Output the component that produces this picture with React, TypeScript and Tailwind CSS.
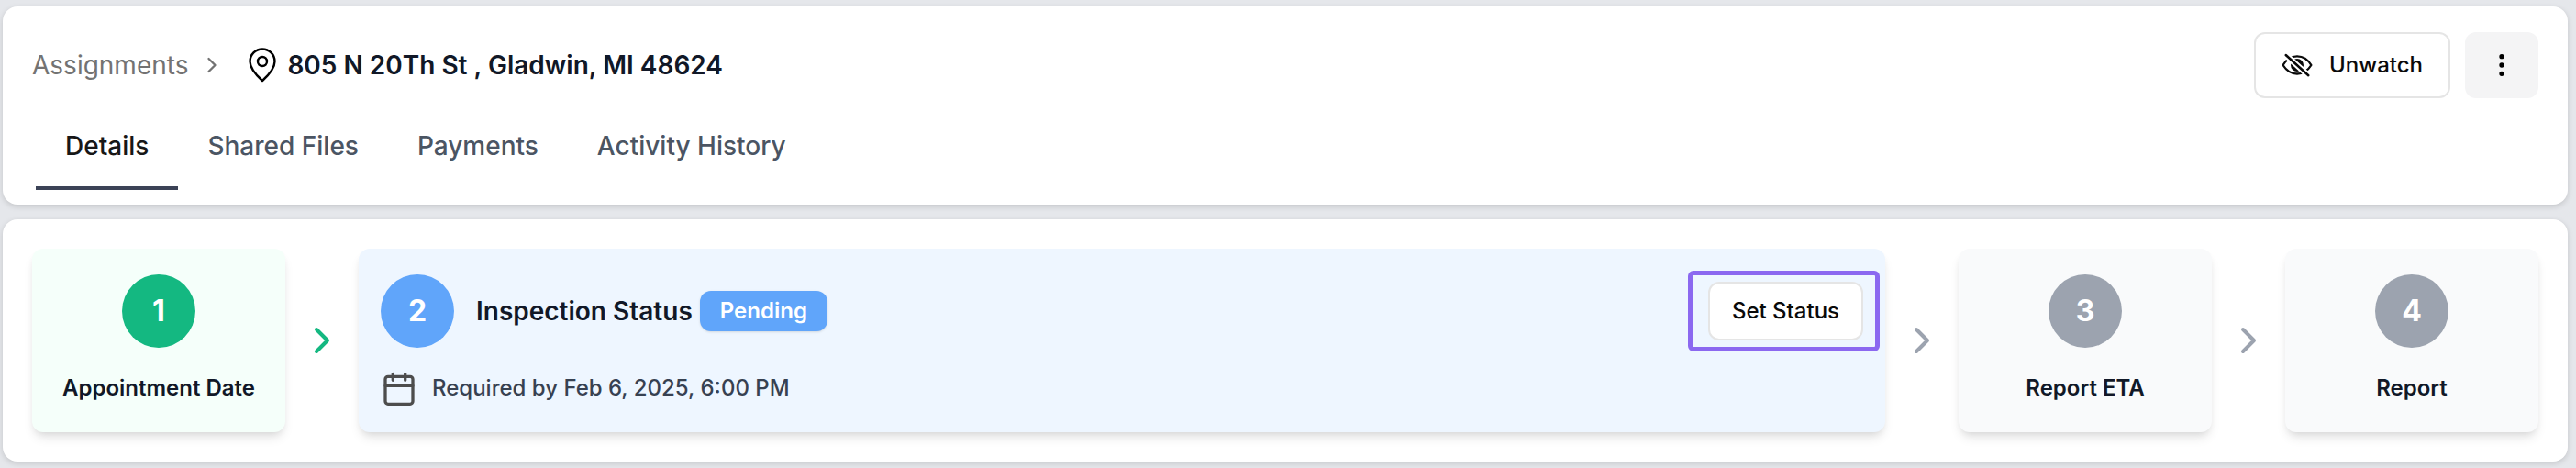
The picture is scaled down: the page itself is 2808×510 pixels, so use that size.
import { ChevronRight, EllipsisVertical } from "lucide-react";

const tabs = ["Details", "Shared Files", "Payments", "Activity History"];

function PinIcon() {
  return (
    <svg width="32" height="38" viewBox="-2 0 32 38" fill="none" stroke="currentColor" strokeWidth="2.4" aria-hidden="true">
      <path d="M15 36C10 31.5 1.5 23.5 1.5 15a13.5 13.5 0 0 1 27 0C28.5 23.5 20 31.5 15 36Z" strokeLinejoin="round" />
      <circle cx="15" cy="15" r="5" />
    </svg>
  );
}

function EyeSlashIcon() {
  return (
    <svg width="36" height="26" viewBox="0 0 36 26" fill="none" strokeLinecap="round" aria-hidden="true">
      <path
        d="M1.6 13C6 5.5 11 3.3 17 3.3S28 5.5 32.4 13C28 20 23 22.5 17 22.5S6 20 1.6 13Z"
        stroke="currentColor"
        strokeWidth="2.3"
        strokeLinejoin="round"
      />
      <circle cx="17" cy="13" r="7" fill="currentColor" />
      <path d="M3.5 1 30.5 25.5" stroke="#fff" strokeWidth="6.5" />
      <path d="M4.7 2 29.3 24.2" stroke="currentColor" strokeWidth="2.5" />
    </svg>
  );
}

function CalendarIcon() {
  return (
    <svg
      width="40"
      height="40"
      viewBox="0 0 40 40"
      fill="none"
      stroke="#4d4d4d"
      strokeWidth="3.3"
      strokeLinecap="round"
      aria-hidden="true"
    >
      <rect x="5" y="7.3" width="30" height="30" rx="3" />
      <path d="M5 17.3h30M13.3 4.3v7M26.7 4.3v7" />
    </svg>
  );
}

function SmallStep({ number, label, done }: { number: number; label: string; done?: boolean }) {
  return (
    <li
      className={`flex h-[200px] w-[276px] shrink-0 flex-col items-center rounded-xl pt-7 shadow-[0_8px_12px_-2px_rgba(0,0,0,0.1),0_4px_8px_-4px_rgba(0,0,0,0.1)] ${
        done ? "bg-[#f5fffa]" : "bg-[#f9fafb]"
      }`}
    >
      <span
        className={`flex size-20 items-center justify-center rounded-full text-[32px] font-bold text-white ${
          done ? "bg-[#14b881]" : "bg-[#9ca3af]"
        }`}
      >
        {number}
      </span>
      <span className="mt-7 text-2xl font-semibold text-[#111827]">{label}</span>
    </li>
  );
}

function Arrow({ done }: { done?: boolean }) {
  return (
    <li aria-hidden="true" className="flex w-20 shrink-0 items-center justify-center">
      <ChevronRight size={48} className={done ? "text-[#14b881]" : "text-[#9ca3af]"} />
    </li>
  );
}

export default function App() {
  return (
    <div className="flex min-h-screen flex-col gap-4 bg-[#e5e7eb] pt-[7px] pr-[9px] pb-[7px] pl-[3px] font-['Inter',sans-serif]">
      <header className="rounded-2xl bg-white px-8 pt-7 pb-4 shadow-[0_2px_6px_rgba(0,0,0,0.15)]">
        <div className="flex h-[72px] items-center justify-between">
          <nav aria-label="Breadcrumb" className="flex items-center text-[28px] leading-10">
            <a href="#" className="text-[#737373]">
              Assignments
            </a>
            <ChevronRight size={28} strokeWidth={2} className="ml-3 text-[#737373]" />
            <span className="ml-6">
              <PinIcon />
            </span>
            <h1 className="ml-3 font-semibold text-[#111827]">805 N 20Th St , Gladwin, MI 48624</h1>
          </nav>
          <div className="flex gap-4">
            <button className="flex h-[72px] items-center gap-4 rounded-xl border-2 border-[#e5e5e5] bg-white px-7 text-2xl font-medium text-[#0a0a0a]">
              <EyeSlashIcon />
              Unwatch
            </button>
            <button aria-label="More actions" className="flex h-[72px] w-20 items-center justify-center rounded-xl bg-[#f4f4f5]">
              <EllipsisVertical size={32} strokeWidth={2} />
            </button>
          </div>
        </div>
        <div role="tablist" className="mt-7 flex pl-1">
          {tabs.map((tab, i) => (
            <button
              key={tab}
              role="tab"
              aria-selected={i === 0}
              className={`h-[72px] border-b-4 px-8 pb-5 text-[28px] leading-10 font-medium ${
                i === 0 ? "border-[#3b4256] text-[#171717]" : "border-transparent text-[#4b5563]"
              }`}
            >
              {tab}
            </button>
          ))}
        </div>
      </header>

      <main className="rounded-2xl bg-white p-8 shadow-[0_2px_6px_rgba(0,0,0,0.15)]">
        <ol className="flex">
          <SmallStep number={1} label="Appointment Date" done />
          <Arrow done />
          <li className="h-[200px] grow rounded-xl bg-[#eef6ff] px-6 pt-7 shadow-[0_8px_12px_-2px_rgba(0,0,0,0.1),0_4px_8px_-4px_rgba(0,0,0,0.1)]">
            <div className="flex items-center">
              <span className="flex size-20 items-center justify-center rounded-full bg-[#60a5fa] text-[32px] font-bold text-white">
                2
              </span>
              <h2 className="ml-6 text-[28px] font-semibold text-[#111827]">Inspection Status</h2>
              <span className="ml-2 rounded-xl bg-[#60a5fa] px-[22px] py-1 text-2xl leading-9 font-semibold text-white shadow-sm">
                Pending
              </span>
              <div className="relative ml-auto">
                <button className="h-16 rounded-xl border-2 border-[#e5e5e5] bg-white px-6 text-2xl font-medium text-[#0a0a0a]">
                  Set Status
                </button>
                <span className="pointer-events-none absolute -inset-y-3 -right-[18px] -left-[22px] rounded-md border-[5px] border-[#8b68f0]" />
              </div>
            </div>
            <div className="mt-6 flex items-center text-2xl font-medium text-[#374151]">
              <CalendarIcon />
              <span className="ml-4">Required by Feb 6, 2025, 6:00 PM</span>
            </div>
          </li>
          <Arrow />
          <SmallStep number={3} label="Report ETA" />
          <Arrow />
          <SmallStep number={4} label="Report" />
        </ol>
      </main>
    </div>
  );
}
